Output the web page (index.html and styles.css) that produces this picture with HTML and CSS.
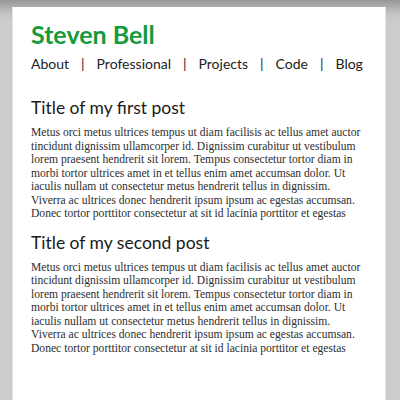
FILE: index.html
```html
<!DOCTYPE html>
<html>
<head>
<meta charset="utf-8">
<link rel="stylesheet" href="styles.css">
</head>
<body>
<main class="page">
  <header class="site-header">
    <h1 class="site-title">Steven Bell</h1>
    <nav class="nav">
      <a class="nav-link">About</a><span class="sep">|</span><a class="nav-link">Professional</a><span class="sep">|</span><a class="nav-link">Projects</a><span class="sep">|</span><a class="nav-link">Code</a><span class="sep">|</span><a class="nav-link">Blog</a>
    </nav>
  </header>
  <article class="post">
    <h2 class="post-title">Title of my first post</h2>
    <p class="post-body">Metus orci metus ultrices tempus ut diam facilisis ac tellus amet auctor tincidunt dignissim ullamcorper id. Dignissim curabitur ut vestibulum lorem praesent hendrerit sit lorem. Tempus consectetur tortor diam in morbi tortor ultrices amet in et tellus enim amet accumsan dolor. Ut iaculis nullam ut consectetur metus hendrerit tellus in dignissim. Viverra ac ultrices donec hendrerit ipsum ipsum ac egestas accumsan. Donec tortor porttitor consectetur at sit id lacinia porttitor et egestas</p>
  </article>
  <article class="post">
    <h2 class="post-title">Title of my second post</h2>
    <p class="post-body">Metus orci metus ultrices tempus ut diam facilisis ac tellus amet auctor tincidunt dignissim ullamcorper id. Dignissim curabitur ut vestibulum lorem praesent hendrerit sit lorem. Tempus consectetur tortor diam in morbi tortor ultrices amet in et tellus enim amet accumsan dolor. Ut iaculis nullam ut consectetur metus hendrerit tellus in dignissim. Viverra ac ultrices donec hendrerit ipsum ipsum ac egestas accumsan. Donec tortor porttitor consectetur at sit id lacinia porttitor et egestas</p>
  </article>
</main>
</body>
</html>
```

FILE: styles.css
```css
html {
  background: #cccccc linear-gradient(#989898, #c4c4c4 14px, #cccccc 22px) no-repeat;
  height: 100%;
}
body {
  margin: 0;
  min-height: 100%;
  display: flex;
}
.page {
  box-sizing: border-box;
  width: 372px;
  margin: 7px 0 0 13px;
  min-height: 393px;
  background: #ffffff;
  padding: 12px 18px 20px 18px;
  box-shadow: -1px 0 0 #e4e4e4, 1px 0 0 #e4e4e4;
}
.site-title {
  font-family: Lato, sans-serif;
  font-weight: 700;
  font-size: 25px;
  line-height: 30px;
  color: #159a3c;
  margin: 0;
}
.nav {
  font-family: Lato, sans-serif;
  font-size: 14px;
  line-height: 18px;
  color: #222222;
  margin-top: 6px;
  display: flex;
}
.nav-link {
  color: #222222;
}
.sep {
  padding: 0 12px;
}
.post {
  margin-top: 24px;
}
.post + .post {
  margin-top: 11px;
}
.post-title {
  font-family: Lato, sans-serif;
  font-weight: 400;
  font-size: 17.5px;
  line-height: 22px;
  color: #1a1a1a;
  margin: 0 0 7px 0;
}
.post-body {
  font-family: "Liberation Serif", serif;
  font-size: 11.6px;
  line-height: 13.5px;
  color: #2e2e2e;
  margin: 0;
}
```
